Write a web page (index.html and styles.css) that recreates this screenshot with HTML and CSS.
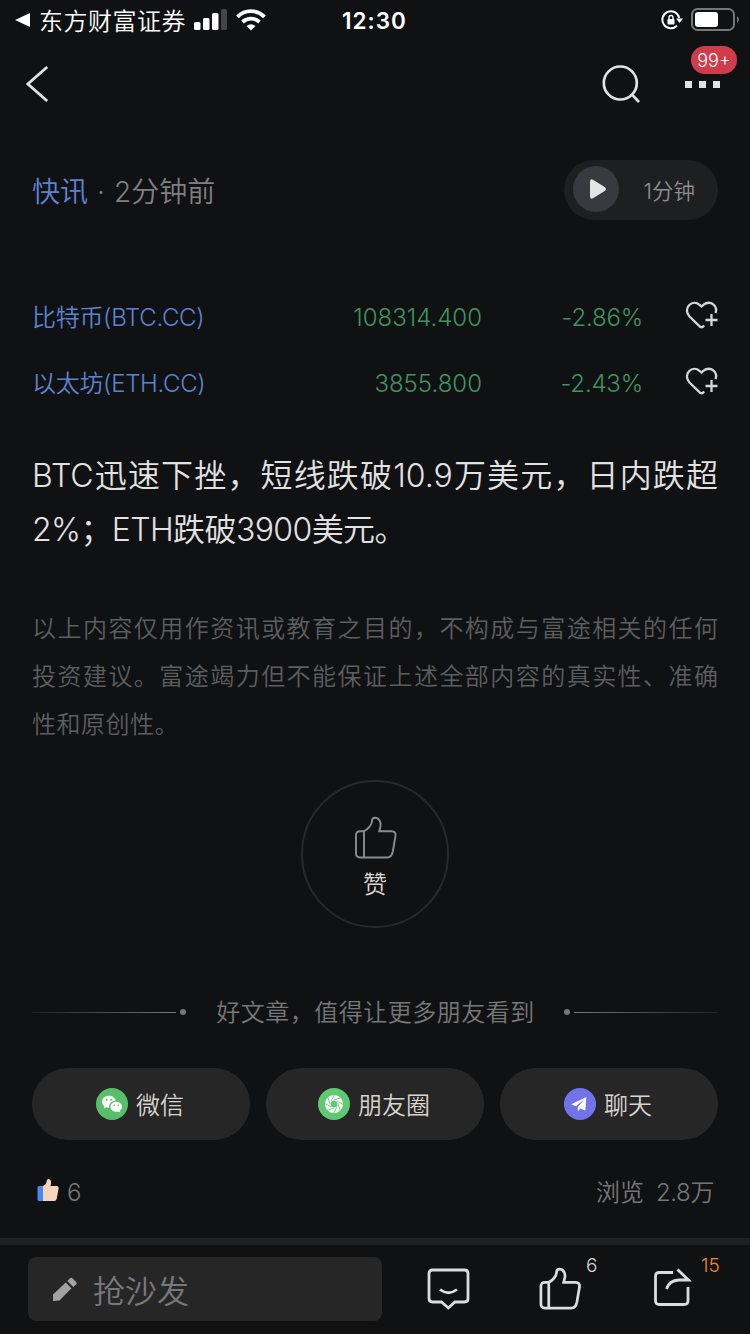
FILE: index.html
```html
<!DOCTYPE html>
<html lang="zh-CN">
<head>
  <meta charset="UTF-8">
  <meta name="viewport" content="width=device-width, initial-scale=1.0">
  <title>快讯</title>
  <link rel="stylesheet" href="styles.css">
</head>
<body>
  <svg class="symbols" width="0" height="0">
    <symbol id="thumb" viewBox="0 0 44 44">
      <path d="M11 15.2C15 13.5 18.8 9 19 5C19.1 2.6 20.3 1.7 22 1.7C26 1.7 28.2 6 27.5 10L26.3 15.2H38.5C41.6 15.2 42.9 17 42.5 19.8L39.8 35.5C39 39.5 37.2 41.5 34 41.5H7C4.5 41.5 3 40 3 37.5V19.2C3 16.7 4.5 15.2 7 15.2ZM11 15.2V41.5"/>
    </symbol>
    <symbol id="heart" viewBox="0 0 36 30">
      <path d="M20.2 25.5L18.8 26.8Q17.5 27.8 16.2 26.8L5.5 16.5C2.3 13.2 2.1 8.2 5 5.2C8.2 2 12.5 2.2 15.6 4.8L17.5 6.5L19.6 4.6C22.8 2 27.2 2.1 30 5C32.2 7.3 32.6 10.2 31.5 13M27.5 14V26M21.5 20H33.5"/>
    </symbol>
  </svg>

  <div class="status">
    <div class="status__left">
      <svg width="16" height="16" viewBox="0 0 16 16"><path d="M0 8L15 1V15Z" fill="#fff"/></svg>
      <span class="status__app">东方财富证券</span>
      <svg class="status__signal" width="34" height="22" viewBox="0 0 34 22">
        <g fill="#fff"><rect y="13" width="6.5" height="8" rx="1.5"/><rect x="9" y="9" width="6.5" height="12" rx="1.5"/><rect x="18" y="4" width="6.5" height="17" rx="1.5"/></g>
        <rect x="27" width="6" height="21" rx="1.5" fill="#454547"/>
      </svg>
      <svg class="status__wifi" width="30" height="22" viewBox="0 0 30 22" fill="none" stroke="#fff" stroke-width="3.8">
        <path d="M1.5 7.8C9 .3 21 .3 28.5 7.8M6.5 13C11.5 8.6 18.5 8.6 23.5 13"/>
        <path d="M15 21.5L10.5 17Q15 13.3 19.5 17Z" fill="#fff" stroke="none"/>
      </svg>
    </div>
    <span class="status__time">12:30</span>
    <div class="status__right">
      <svg width="22" height="20" viewBox="0 0 22 20" fill="none" stroke="#fff" stroke-width="2">
        <path d="M15.9 15.7A8.5 8.5 0 1 1 18.2 8"/>
        <path d="M15 8.5H22L18.5 13Z" fill="#fff" stroke="none"/>
        <rect x="6.5" y="9" width="7" height="5.5" rx=".8" fill="#fff" stroke="none"/>
        <path d="M8 9.5V7.5A2 2 0 0 1 12 7.5V9.5" stroke-width="1.4"/>
      </svg>
      <svg width="48" height="24" viewBox="0 0 48 24">
        <rect x="1" y="1" width="42" height="21" rx="5.5" fill="none" stroke="#77777a" stroke-width="2"/>
        <rect x="4" y="4" width="23" height="15" rx="3" fill="#fff"/>
        <path d="M46 8Q50 11.5 46 15Z" fill="#77777a"/>
      </svg>
    </div>
  </div>

  <div class="nav">
    <svg width="24" height="38" viewBox="0 0 24 38" fill="none" stroke="#e2e2e3" stroke-width="2.8"><path d="M21.2 2L1.8 19L21.2 36"/></svg>
    <div class="nav__actions">
      <svg width="40" height="40" viewBox="0 0 40 40" fill="none" stroke="#e2e2e3" stroke-width="2.7"><circle cx="19.3" cy="19" r="16.5"/><path d="M30.8 30.3L38 38"/></svg>
      <div class="more">
        <i></i><i></i><i></i>
        <span class="more__badge">99+</span>
      </div>
    </div>
  </div>

  <div class="article">
    <div class="meta">
      <div class="meta__info"><span class="meta__tag">快讯</span><span class="meta__dot">·</span><span>2分钟前</span></div>
      <div class="listen">
        <span class="listen__play">
          <svg width="18" height="20" viewBox="0 0 18 20"><path d="M1 2.5Q1-.5 4 .7L15.7 8Q18.2 10 15.7 12L4 19.3Q1 20.5 1 17.5Z" fill="#e4e4e4"/></svg>
        </span>
        <span class="listen__time">1分钟</span>
      </div>
    </div>

    <div class="quotes">
      <div class="quote">
        <span class="quote__name">比特币(BTC.CC)</span>
        <span class="quote__price">108314.400</span>
        <span class="quote__change">-2.86%</span>
        <svg class="quote__like" width="36" height="30"><use href="#heart"/></svg>
      </div>
      <div class="quote">
        <span class="quote__name">以太坊(ETH.CC)</span>
        <span class="quote__price">3855.800</span>
        <span class="quote__change">-2.43%</span>
        <svg class="quote__like" width="36" height="30"><use href="#heart"/></svg>
      </div>
    </div>

    <h1 class="title">
      <span class="line">BTC迅速下挫，短线跌破10.9万美元，日内跌超</span>
      <span class="line line--last">2%；ETH跌破3900美元。</span>
    </h1>

    <p class="notice">
      <span class="line">以上内容仅用作资讯或教育之目的，不构成与富途相关的任何</span>
      <span class="line">投资建议。富途竭力但不能保证上述全部内容的真实性、准确</span>
      <span class="line line--last">性和原创性。</span>
    </p>

    <div class="praise">
      <svg class="praise__icon" width="44" height="44"><use href="#thumb"/></svg>
      <span>赞</span>
    </div>

    <div class="divider">
      <span class="divider__line"></span><i class="divider__dot"></i>
      <span class="divider__text">好文章，值得让更多朋友看到</span>
      <i class="divider__dot"></i><span class="divider__line divider__line--right"></span>
    </div>

    <div class="share">
      <div class="share__btn">
        <svg width="32" height="32" viewBox="0 0 32 32">
          <circle cx="16" cy="16" r="16" fill="#57be6a"/>
          <path d="M13 7.7C9 7.7 6 10.3 6 13.7C6 15.7 7 17.3 8.5 18.4L8 20.5L10.5 19.2L13.2 19.7C12.5 15.5 16 12.8 19.7 12.8C19.2 9.8 16.5 7.7 13 7.7Z" fill="#fff"/>
          <path d="M20.2 13.7C16.8 13.7 14.5 16 14.5 18.7C14.5 21.5 17 23.7 20.2 23.7L22.3 23.4L24.3 24.5L23.9 22.6C25.3 21.6 26 20.3 26 18.7C26 16 23.5 13.7 20.2 13.7Z" fill="#fff"/>
          <g fill="#57be6a"><circle cx="10.7" cy="11.7" r="1"/><circle cx="15.3" cy="11.7" r="1"/><circle cx="18.3" cy="17.2" r=".8"/><circle cx="22.2" cy="17.2" r=".8"/></g>
        </svg>
        <span>微信</span>
      </div>
      <div class="share__btn">
        <svg width="32" height="32" viewBox="0 0 32 32">
          <circle cx="16" cy="16" r="16" fill="#5fca72"/>
          <circle cx="16" cy="16" r="6.3" fill="none" stroke="#fff" stroke-width="5.6"/>
          <g stroke="#5fca72" stroke-width=".9">
            <path id="blade" d="M13.2 12.8L16.6 6.5"/>
            <use href="#blade" transform="rotate(45 16 16)"/><use href="#blade" transform="rotate(90 16 16)"/>
            <use href="#blade" transform="rotate(135 16 16)"/><use href="#blade" transform="rotate(180 16 16)"/>
            <use href="#blade" transform="rotate(225 16 16)"/><use href="#blade" transform="rotate(270 16 16)"/>
            <use href="#blade" transform="rotate(315 16 16)"/>
          </g>
        </svg>
        <span>朋友圈</span>
      </div>
      <div class="share__btn">
        <svg width="32" height="32" viewBox="0 0 32 32">
          <circle cx="16" cy="16" r="16" fill="#7273e8"/>
          <path d="M7.3 16.2L22.3 9L21.3 22.5L16.3 20.5L13.8 23.2V19L20.5 11.2L11.8 18.2Z" fill="#fff"/>
        </svg>
        <span>聊天</span>
      </div>
    </div>

    <div class="stats">
      <div class="stats__likes">
        <svg width="24" height="26" viewBox="0 0 24 26">
          <path d="M3 9H7V24H3Q1.5 24 1.5 22.5V10.5Q1.5 9 3 9Z" fill="#4687f2"/>
          <path d="M7 9Q10.5 7.5 10.8 3.5Q10.9 2 12.5 2Q15.5 2.5 15 6.5L14.5 9H20.5Q23 9 22.6 11.5L20.8 21.5Q20.3 24 18 24H7Z" fill="#f5d4bd"/>
        </svg>
        <span>6</span>
      </div>
      <div class="stats__views">浏览<span>2.8万</span></div>
    </div>
  </div>

  <div class="toolbar">
    <div class="toolbar__input">
      <svg width="26" height="26" viewBox="0 0 26 26" fill="#a2a2a3"><path d="M1 25V18.5L13.7 6.5L19.5 12.3L7.5 24.5ZM15.3 5L18 2.2Q19.2 1.2 20.4 2.2L24.2 6Q25.2 7.2 24.2 8.4L21.2 11Z"/></svg>
      <span>抢沙发</span>
    </div>
    <div class="toolbar__item">
      <svg width="44" height="44" viewBox="0 0 44 44"><path d="M6.5 3H38.5Q42 3 42 6.5V31.5Q42 35 38.5 35H29L22.3 41L15.5 35H6.5Q3 35 3 31.5V6.5Q3 3 6.5 3ZM14 22.5Q22.3 29 31 22.5"/></svg>
    </div>
    <div class="toolbar__item">
      <svg width="43" height="44"><use href="#thumb"/></svg>
      <span class="toolbar__count">6</span>
    </div>
    <div class="toolbar__item">
      <svg width="44" height="44" viewBox="0 0 44 44"><path d="M24 5.5H10.500Q6.500 5.500 6.500 9.500V33.500Q6.500 37.500 10.500 37.500H35Q39 37.500 39 33.500V20M28.500 2.500L39.500 13H30Q20 13.500 17.500 22"/></svg>
      <span class="toolbar__count toolbar__count--hot">15</span>
    </div>
  </div>
</body>
</html>
```
FILE: styles.css
```css
* {
  box-sizing: border-box;
}
body {
  margin: 0;
  width: 750px;
  height: 1334px;
  overflow: hidden;
  display: flex;
  flex-direction: column;
  background: #101113;
  color: #e2e2e3;
  font-family: Inter, 'Noto Sans CJK SC', sans-serif;
  font-size: 24px;
  font-weight: 350;
}
svg {
  flex-shrink: 0;
  display: block;
}
.symbols {
  position: absolute;
}

.status {
  height: 40px;
  padding: 0 11px 0 15px;
  display: grid;
  grid-template-columns: 1fr 66px 1fr;
  align-items: center;
  color: #fff;
}
.status__left,
.status__right {
  display: flex;
  align-items: center;
}
.status__app {
  margin-left: 8px;
  padding-top: 3px;
  line-height: 37px;
  letter-spacing: .5px;
}
.status__signal {
  margin-left: 8px;
}
.status__wifi {
  margin-left: 8px;
}
.status__time {
  margin-left: -5px;
  padding-top: 1px;
  font-size: 22.5px;
  font-weight: 600;
  letter-spacing: 1px;
  text-align: center;
  white-space: nowrap;
}
.status__right {
  justify-content: flex-end;
  gap: 8px;
}

.nav {
  height: 88px;
  padding: 0 30px 0 26px;
  display: flex;
  align-items: center;
  justify-content: space-between;
}
.nav__actions {
  display: flex;
  align-items: center;
  gap: 44px;
}
.more {
  position: relative;
  display: flex;
  gap: 7px;
}
.more i {
  width: 7px;
  height: 7px;
  background: #e2e2e3;
}
.more__badge {
  position: absolute;
  left: 6px;
  top: -35px;
  width: 46px;
  height: 28px;
  border-radius: 14px;
  background: #cf3d4d;
  color: #fff;
  font-size: 18px;
  line-height: 29px;
  text-align: center;
}

.article {
  padding: 32px 32px 0;
}
.meta {
  height: 60px;
  display: flex;
  align-items: center;
  justify-content: space-between;
}
.meta__info {
  padding-top: 4px;
  display: flex;
  color: #7f8081;
  font-size: 28px;
  line-height: 60px;
}
.meta__tag {
  color: #5b83d0;
}
.meta__dot {
  width: 26px;
  text-align: center;
}
.listen {
  width: 154px;
  height: 60px;
  padding: 0 23px 0 9px;
  border-radius: 30px;
  display: flex;
  align-items: center;
  justify-content: space-between;
  background: #1e1f21;
}
.listen__play {
  width: 46px;
  height: 46px;
  margin-top: -2px;
  padding-left: 3px;
  border-radius: 50%;
  display: flex;
  align-items: center;
  justify-content: center;
  background: #383a3f;
}
.listen__time {
  padding-top: 2px;
  color: #8e8f90;
  font-size: 21.5px;
  line-height: 60px;
}

.quotes {
  margin-top: 64px;
}
.quote {
  height: 66px;
  display: grid;
  grid-template-columns: 250px 200px 160px 1fr;
  align-items: center;
  color: #40945f;
  font-size: 24px;
  line-height: 64px;
}
.quote span {
  padding-top: 2px;
}
.quote__name {
  color: #5b83d0;
  letter-spacing: -.3px;
}
.quote__price,
.quote__change {
  text-align: right;
}
.quote__change {
  letter-spacing: -.2px;
  margin-right: -1px;
}
.quote__like {
  justify-self: end;
  margin-top: -4px;
  margin-right: -2px;
  fill: none;
  stroke: #d6d6d7;
  stroke-width: 2.3;
}

.line {
  display: block;
  white-space: nowrap;
  text-align: justify;
  text-align-last: justify;
}
.line--last {
  text-align-last: left;
}
.title {
  margin: 33px 0 0;
  font-size: 32px;
  font-weight: 350;
  line-height: 54px;
}
.title .line--last {
  letter-spacing: -.6px;
}
.notice {
  margin: 48px 0 0;
  color: #5d5e5f;
  font-size: 24px;
  line-height: 48px;
}
.notice .line--last {
  letter-spacing: .5px;
}

.praise {
  width: 148px;
  height: 148px;
  margin: 31px auto 0;
  padding-top: 34px;
  border: 2px solid #29292a;
  border-radius: 50%;
  display: flex;
  flex-direction: column;
  align-items: center;
  color: #d8d5ce;
  line-height: 49px;
}
.praise__icon {
  fill: none;
  stroke: #8b8c8d;
  stroke-width: 1.9;
}

.divider {
  height: 48px;
  margin-top: 60px;
  display: flex;
  align-items: center;
  gap: 4px;
}
.divider__line {
  flex: 1;
  height: 1px;
  background: linear-gradient(to right, #202122, #777);
}
.divider__line--right {
  background: linear-gradient(to left, #202122, #777);
}
.divider__dot {
  width: 6px;
  height: 6px;
  border-radius: 50%;
  background: #777;
}
.divider__text {
  margin: 0 25px 0 26px;
  padding-top: 2px;
  color: #777;
  letter-spacing: .5px;
  line-height: 48px;
}

.share {
  margin-top: 32px;
  display: grid;
  grid-template-columns: repeat(3, 1fr);
  gap: 16px;
}
.share__btn {
  height: 72px;
  border-radius: 36px;
  display: flex;
  align-items: center;
  justify-content: center;
  gap: 8px;
  padding-right: 2px;
  background: #262626;
  color: #d8d5ce;
  line-height: 68px;
}
.share__btn span {
  padding-top: 4px;
}

.stats {
  height: 98px;
  padding: 6px 4px 0;
  display: flex;
  align-items: flex-start;
  justify-content: space-between;
  color: #777;
  line-height: 93px;
}
.stats__likes {
  display: flex;
  align-items: center;
  gap: 7px;
}
.stats__likes svg {
  margin-top: -5px;
}
.stats__views span {
  margin-left: 12px;
  letter-spacing: -.4px;
}

.toolbar {
  flex: 1;
  padding: 12px 0 13px 28px;
  border-top: 7px solid #1e2022;
  display: flex;
  align-items: center;
}
.toolbar__input {
  flex: 0 0 354px;
  height: 64px;
  margin-right: 44px;
  padding-left: 24px;
  border-radius: 8px;
  display: flex;
  align-items: center;
  gap: 15px;
  background: #262626;
  color: #77787a;
  font-size: 32px;
  line-height: 58px;
}
.toolbar__input span {
  padding-top: 6px;
}
.toolbar__item {
  position: relative;
  margin-right: 68px;
}
.toolbar__item svg {
  fill: none;
  stroke: #dcdcdd;
  stroke-width: 2.8;
}
.toolbar__count {
  position: absolute;
  left: 48px;
  top: -13px;
  color: #d8d5ce;
  font-size: 19px;
}
.toolbar__count--hot {
  left: 52px;
  color: #ee8a2c;
}
```
